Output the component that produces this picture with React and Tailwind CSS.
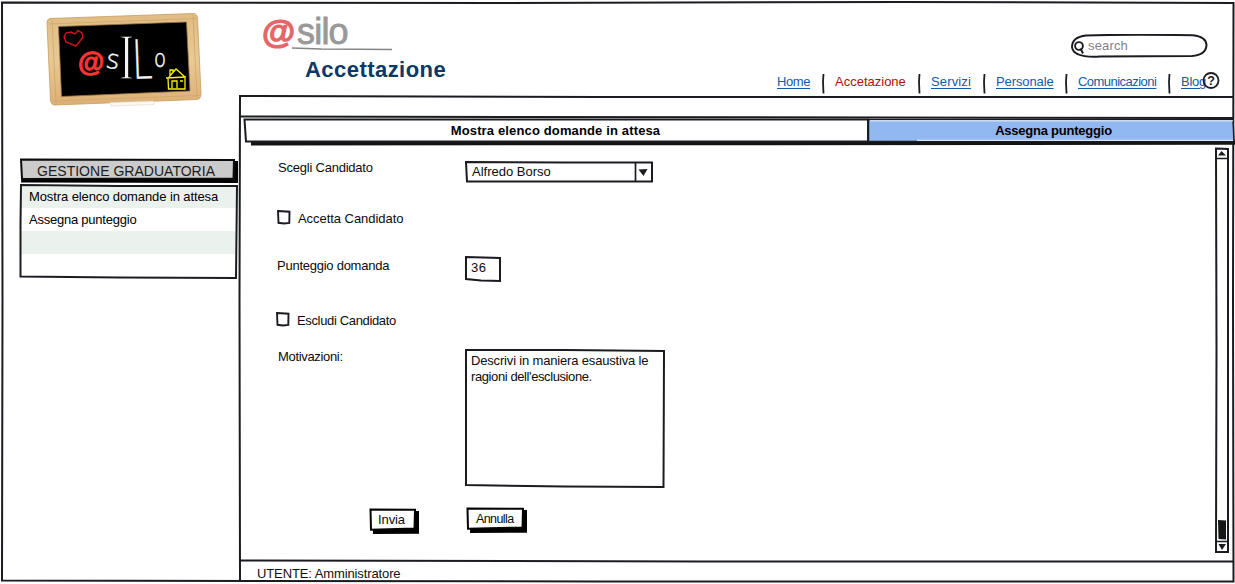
import React from "react";

const INK = "#1b1c22";

/* Hand-drawn outline laid over a box of the given size. */
function Outline({ w, h, points, width = 2, fill = "none" }) {
  return (
    <svg className="pointer-events-none absolute top-0 left-0 overflow-visible" width={w} height={h} viewBox={`0 0 ${w} ${h}`}>
      <polygon points={points} fill={fill} stroke={INK} strokeWidth={width} strokeLinejoin="miter" />
    </svg>
  );
}

function Blackboard() {
  return (
    <svg className="ml-[45px] mt-[12px] block" width="158" height="97" viewBox="45 12 158 97">
      <defs>
        <linearGradient id="wood" x1="0" y1="0" x2="0" y2="1">
          <stop offset="0" stopColor="#e0bc84" />
          <stop offset="0.5" stopColor="#e9c994" />
          <stop offset="1" stopColor="#dcb076" />
        </linearGradient>
      </defs>
      <path d="M50 18.5 L193 13.5 Q197 13.5 197.5 18 L201 94 Q201 99 197 99.5 L55 105 Q51 105 50.5 100 L47 23 Q47 19 50 18.5Z" fill="url(#wood)" stroke="#c79c60" strokeWidth="0.8" />
      <path d="M49 24 L196 18.5 M52 101 L199 95.5 M52 20 L56 103 M193 15 L197 98" stroke="#d1a266" strokeWidth="0.7" fill="none" />
      <path d="M58.5 26.5 L186.5 22 L190 91 L61.5 96.5Z" fill="#000" stroke="#9d7442" strokeWidth="0.8" />
      <path d="M110 102.5 L154 101 L154 104.5 L111 106Z" fill="#faf8f2" stroke="#d9d0c0" strokeWidth="0.5" />
      <path d="M76 46 L66 42 L64 37 L66 33 L71 32 L75 34 L78 30.500 L82 33 L83 37 L80 41Z" fill="none" stroke="#d0141b" strokeWidth="1.4" />
      <text x="78" y="71" fontFamily="Liberation Sans" fontWeight="bold" fontSize="27" fill="#ff3434" stroke="#ff3434" strokeWidth="1" transform="rotate(-2 91 62)">@</text>
      <g fill="#f5f5f5" fontFamily="Liberation Sans">
        <text x="106" y="68.500" fontSize="26" fontFamily="DejaVu Sans" fontWeight="200" stroke="#f5f5f5" strokeWidth=".5" transform="rotate(9 113 62)">s</text>
        <text transform="translate(119 78.5) scale(.7 1)" fontSize="65" fontFamily="Liberation Serif" stroke="#000" strokeWidth="1.5">I</text>
        <text transform="translate(132.500 79) rotate(-2) scale(.68 1)" fontSize="54" fontFamily="DejaVu Sans" fontWeight="200" stroke="#f5f5f5" strokeWidth=".4">L</text>
        <text transform="translate(154 66.500) scale(.82 1)" fontSize="24" fontFamily="DejaVu Sans" fontWeight="200" stroke="#f5f5f5" strokeWidth=".6">o</text>
      </g>
      <path d="M168 78 L168.500 89 L185 89 L185 78 M166 78 L186 77 M169 77 L176 69 L185 77 M170 75 L170 70 L173 70 L173 72 M172 88 L172 81 L177 81 L177 88 M180 81 L183 81" fill="none" stroke="#f8f500" strokeWidth="1.3" />
    </svg>
  );
}

function Separator() {
  return (
    <svg className="block w-[25px] shrink-0" width="25" height="20" viewBox="0 0 25 20">
      <path d="M13.500 0 L13 8 L13.500 19.500" stroke={INK} strokeWidth="1.8" fill="none" />
    </svg>
  );
}

function Header() {
  const link = "shrink-0 whitespace-nowrap text-[#135ba5] underline underline-offset-2";
  return (
    <header className="flex h-[95px] w-[995px]">
      <div className="w-[300px] pl-[22px] pt-[12px]">
        <div className="flex h-[37px] items-start whitespace-nowrap">
          <span className="w-[35px] text-[34px] leading-[38px] font-bold text-[#e56568] [-webkit-text-stroke:1.2px_#e56568]">@</span>
          <span className="text-[36px] leading-[40px] tracking-[-0.8px] text-[#999999] [-webkit-text-stroke:0.8px_#999999]">silo</span>
        </div>
        <svg className="ml-[29px] -mt-[2px] block" width="102" height="4" viewBox="0 0 102 4">
          <path d="M1 1 L30 2 L101 2.500" stroke="#85858a" strokeWidth="1.4" fill="none" />
        </svg>
        <h1 className="mt-[6px] ml-[43px] text-[22px] leading-[26px] font-bold tracking-[0.45px] text-[#0b3865]">Accettazione</h1>
      </div>
      <div className="flex w-[695px] flex-col">
        <div className="relative mt-[34px] ml-[530px] h-[24px] w-[138px]">
          <svg className="absolute inset-0" width="138" height="24" viewBox="0 0 138 24">
            <path d="M16 1.500 Q50 .3 123 1.200 Q136 2.500 136.500 11 Q136 21 122 22 L30 22.500 Q3 24 2 13 Q2 3 16 1.500Z" fill="white" stroke={INK} strokeWidth="2" />
            <circle cx="9" cy="12" r="3.900" fill="none" stroke={INK} strokeWidth="1.900" />
            <path d="M10.500 14.500 L13 19.500" stroke={INK} strokeWidth="2" />
          </svg>
          <span className="relative block pt-[4px] pl-[18px] text-[13px] leading-[16px] tracking-[0.15px] text-[#85808a]">search</span>
        </div>
        <nav className="mt-[16px] flex h-[20px] items-start pl-[237px] text-[13px] leading-[16px]">
          <a className={`${link} w-[33px] tracking-[-0.4px]`}>Home</a>
          <Separator />
          <a className="w-[71px] shrink-0 whitespace-nowrap text-[#aa1014]">Accetazione</a>
          <Separator />
          <a className={`${link} w-[40px] tracking-[0.15px]`}>Servizi</a>
          <Separator />
          <a className={`${link} w-[57px] tracking-[-0.1px]`}>Personale</a>
          <Separator />
          <a className={`${link} w-[78px] tracking-[-0.53px]`}>Comunicazioni</a>
          <Separator />
          <a className={`${link} w-[21px] tracking-[-0.25px]`}>Blog</a>
          <svg className="relative z-10 -mt-[2px] block shrink-0" width="18" height="18" viewBox="0 0 18 18">
            <circle cx="9" cy="8.500" r="7.500" fill="none" stroke={INK} strokeWidth="1.800" />
            <text x="9" y="13" textAnchor="middle" fontFamily="Liberation Sans" fontWeight="bold" fontSize="12.500" fill={INK}>?</text>
          </svg>
        </nav>
      </div>
    </header>
  );
}

function Sidebar() {
  return (
    <aside className="w-[240px] shrink-0">
      <div className="h-[109px] overflow-hidden">
        <Blackboard />
      </div>
      <div className="relative mt-[49px] ml-[19px] h-[26px] w-[219px]">
        <svg className="absolute inset-0" width="219" height="26" viewBox="0 0 219 26">
          <path d="M2 24.500 L4 5 L216 3 L219 3 L219 25Z" fill="#000" />
          <polygon points="2,1.500 215,2 214.500,20.500 3,21" fill="#cbcbcb" stroke="#0c0c0e" strokeWidth="2" />
        </svg>
        <span className="relative block pt-[5px] pl-[18px] text-[14px] leading-[16px] tracking-[0.02px] text-[#1c1c1c]">GESTIONE GRADUATORIA</span>
      </div>
      <ul className="relative ml-[19px] h-[95px] w-[219px] pt-[3px] text-[13px] leading-[16px] text-black">
        <li className="mr-[2px] ml-[2px] h-[21px] bg-[#ebf2ee] pt-[2px] pl-[8px] tracking-[-0.1px]">Mostra elenco domande in attesa</li>
        <li className="mr-[2px] ml-[2px] h-[23px] pt-[4px] pl-[8px] tracking-[-0.23px]">Assegna punteggio</li>
        <li className="mr-[2px] ml-[2px] h-[23px] bg-[#ebf2ee]" />
        <Outline w={219} h={95} points="2,1 100,2 218,2 217,94 100,93.500 1.500,92.500 1.500,40" />
      </ul>
    </aside>
  );
}

function Tabs() {
  return (
    <div className="relative ml-[3px] flex h-[28px] w-[992px] text-[13px] leading-[16px] font-bold text-black">
      <svg className="absolute inset-0 overflow-visible" width="992" height="28" viewBox="243 118 992 28">
        <path d="M251 141 L1235 140.500 L1235 144.800 L251 145.500Z" fill="#131412" />
        <path d="M244.500 119.500 L868 119.500 L868 141.500 L246 141.500Z" fill="#fff" stroke={INK} strokeWidth="2" />
        <path d="M868.500 119.500 L1233 119.500 L1234 141.500 L868.500 141.500Z" fill="#92b8f2" stroke={INK} strokeWidth="1.500" />
        <path d="M870 120.800 L1233 120.800 M917 140.300 L1233 140.300" stroke="#f6f8ff" strokeWidth="1" />
      </svg>
      <div className="relative w-[625px] pt-[5px] text-center tracking-[0.14px]">Mostra elenco domande in attesa</div>
      <div className="relative w-[367px] pt-[5px] pl-[4px] text-center tracking-[-0.23px]">Assegna punteggio</div>
    </div>
  );
}

function Checkbox({ label, className }) {
  return (
    <label className={`flex items-start ${className}`}>
      <svg className="mr-[7px] block" width="14" height="15" viewBox="0 0 14 15">
        <polygon points="1,1 12.500,1.700 12.300,13 7,13.500 1.500,12.800" fill="#fff" stroke={INK} strokeWidth="1.900" />
      </svg>
      <span className="pt-px">{label}</span>
    </label>
  );
}

function Button({ w, children, className }) {
  return (
    <button className={`relative block h-[26px] text-left ${className}`}>
      <svg className="absolute inset-0 overflow-visible" width={w} height="26" viewBox={`0 0 ${w} 26`}>
        <path d={`M4 26 L4 6 L${w - 3} 3 L${w} 3 L${w} 25.800Z`} fill="#000" />
        <polygon points={`1.500,1.500 ${w - 4},1.800 ${w - 4.5},20.500 2,21.800`} fill="#fff" stroke="#050505" strokeWidth="2" />
      </svg>
      <span className="relative block">{children}</span>
    </button>
  );
}

function Scrollbar() {
  return (
    <svg className="mt-[1px] block" width="15" height="407" viewBox="1214 147 15 407">
      <path d="M1216 148.500 L1228 149 L1228 552 L1216 552 L1216.500 350Z" fill="#fff" stroke={INK} strokeWidth="2" />
      <path d="M1216 158.500 L1228 158.500 M1216 541.500 L1228 541.500" stroke={INK} strokeWidth="1.700" />
      <path d="M1218 155.500 L1221.500 151 L1226 155.500Z M1218.500 544 L1226 544 L1222 550Z" fill={INK} />
      <path d="M1218 520 L1226 520.500 L1226 539.500 L1218.500 539Z" fill="#151616" />
    </svg>
  );
}

function Form() {
  return (
    <form className="w-[974px] pl-[37px] text-[13px] leading-[16px] text-[#0c0c0c]">
      <div className="flex h-[64px] items-start">
        <label className="mt-[14px] w-[188px] pl-[1px] tracking-[-0.22px]">Scegli Candidato</label>
        <div className="relative mt-[15px] h-[22px] w-[188px] pt-[3px] pl-[7px]">
          <Outline w={188} h={22} points="1,1 100,1.500 187,1.500 187,20.500 2,20.500" />
          <svg className="absolute top-0 right-0" width="19" height="22" viewBox="0 0 19 22">
            <path d="M1.500 1 L1.500 21" stroke={INK} strokeWidth="1.700" />
            <path d="M4.500 8.500 L13.500 8 L9.500 15Z" fill={INK} />
          </svg>
          <span className="relative">Alfredo Borso</span>
        </div>
      </div>
      <Checkbox label="Accetta Candidato" className="h-[46px] tracking-[-0.05px]" />
      <div className="flex h-[56px] items-start">
        <label className="mt-[2px] w-[188px] tracking-[-0.25px]">Punteggio domanda</label>
        <div className="relative h-[26px] w-[36px] pt-[4px] pl-[6px] tracking-[0.5px]">
          <Outline w={36} h={26} points="1,1 35,2 35,25 16,24.500 1,23" />
          <span className="relative">36</span>
        </div>
      </div>
      <Checkbox label="Escludi Candidato" className="-ml-px h-[37px] tracking-[-0.35px]" />
      <div className="flex h-[158px] items-start">
        <label className="w-[188px] pl-[1px] tracking-[-0.33px]">Motivazioni:</label>
        <div className="relative h-[139px] w-[200px] pt-[4px] pl-[6px] whitespace-nowrap">
          <Outline w={200} h={139} points="1,1 100,1 199,2 198.500,138 100,137.500 1,136" />
          <p className="relative tracking-[-0.17px]">Descrivi in maniera esaustiva le</p>
          <p className="relative tracking-[-0.4px]">ragioni dell&#39;esclusione.</p>
        </div>
      </div>
      <div className="flex items-start">
        <Button w={50} className="mt-px ml-[92px] w-[50px] pb-[2px] pl-[9px] tracking-[-0.1px]">Invia</Button>
        <Button w={61} className="ml-[47px] w-[61px] pb-[2px] pl-[10px] text-[12.5px] tracking-[-0.6px]">Annulla</Button>
      </div>
    </form>
  );
}

export default function App() {
  return (
    <div className="relative flex h-[584px] w-[1235px] overflow-hidden bg-white font-['Liberation_Sans',sans-serif]">
      <svg className="pointer-events-none absolute inset-0" width="1235" height="584" viewBox="0 0 1235 584">
        <g fill="none" stroke={INK} strokeWidth="2">
          <path d="M2 2.500 L500 3 L900 2 L1233.500 3 L1233 300 L1233.500 581.500 L600 581.500 L2 580.500 L2.500 300Z" />
          <path d="M240 580 L239.500 300 L240 96 L600 97 L1234 97 M240 116.500 L1234 118 M240 560.500 L700 561.500 L1233 561.500" />
        </g>
      </svg>
      <Sidebar />
      <main className="relative flex w-[995px] flex-col">
        <Header />
        <div className="h-[23px]" />
        <Tabs />
        <div className="flex h-[414px] items-start">
          <Form />
          <Scrollbar />
        </div>
        <footer className="mt-[6px] pl-[17px] text-[13px] leading-[16px] tracking-[-0.11px] text-[#101010]">UTENTE: Amministratore</footer>
      </main>
    </div>
  );
}
